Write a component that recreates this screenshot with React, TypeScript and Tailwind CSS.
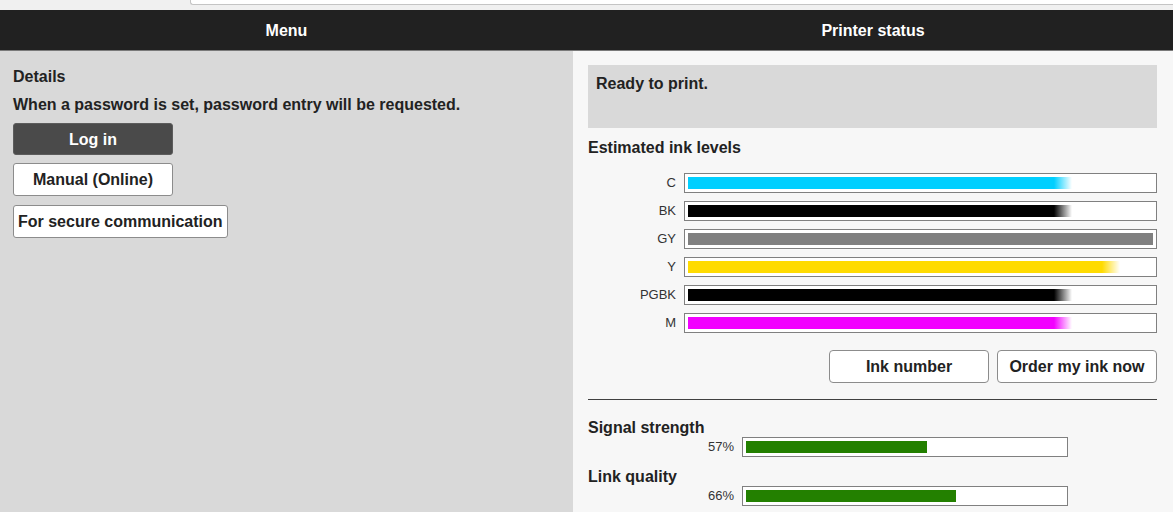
import React from 'react';

const INKS: { name: string; color: string; level: number }[] = [
  { name: 'C', color: '#00cfff', level: 82.5 },
  { name: 'BK', color: '#000000', level: 82.5 },
  { name: 'GY', color: '#808080', level: 100 },
  { name: 'Y', color: '#ffdb00', level: 93 },
  { name: 'PGBK', color: '#000000', level: 82.5 },
  { name: 'M', color: '#f200ff', level: 82.5 },
];

const FADES: Record<string, string> = {
  C: 'from-[#00cfff]',
  BK: 'from-[#000000]',
  Y: 'from-[#ffdb00]',
  PGBK: 'from-[#000000]',
  M: 'from-[#f200ff]',
};

function InkRow({ name, color, level }: { name: string; color: string; level: number }) {
  const full = level >= 100;
  return (
    <div className="flex items-center h-[20px]">
      <div className="w-[96px] pr-[8px] text-right text-[13px] text-[#333]">{name}</div>
      <div className="flex-1 h-[20px] border border-[#808080] bg-white p-[3px]">
        <div className="flex h-full">
          {full ? (
            <div className="w-full h-full" style={{ backgroundColor: color }} />
          ) : (
            <>
              <div className="h-full" style={{ width: `calc(${level}% - 18px)`, backgroundColor: color }} />
              <div className={`w-[18px] h-full bg-linear-to-r ${FADES[name]} to-white/0`} />
            </>
          )}
        </div>
      </div>
    </div>
  );
}

function SignalRow({ label, value }: { label: string; value: number }) {
  return (
    <div>
      <div className="font-bold text-[16px] leading-[18px] text-[#222]">{label}</div>
      <div className="flex items-center h-[20px]">
        <div className="w-[154px] pr-[8px] text-right text-[13px] text-[#333]">{value}%</div>
        <div className="w-[326px] h-[20px] border border-[#808080] bg-white p-[3px]">
          <div className="h-full bg-[#238000]" style={{ width: `${value}%` }} />
        </div>
      </div>
    </div>
  );
}

export default function App() {
  return (
    <div className="w-[1173px] h-[512px] overflow-hidden font-['Liberation_Sans',Arial,sans-serif] text-[#222]">
      {/* address strip */}
      <div className="h-[10px] bg-[#f0f0f0] pl-[190px]">
        <div className="h-[5px] bg-white border-l border-b border-[#c4c4c4] rounded-bl-[3px]" />
      </div>

      <div className="flex h-[41px] bg-[#212121] border-b border-[#7a7a7a] text-white font-bold text-[16px]">
        <div className="w-[573px] flex items-center justify-center pt-[1px]">Menu</div>
        <div className="flex-1 flex items-center justify-center pt-[1px]">Printer status</div>
      </div>

      <div className="flex h-[461px]">
        {/* left menu */}
        <div className="w-[573px] bg-[#d9d9d9] pl-[13px] pt-[16px]">
          <div className="font-bold text-[16px] leading-[20px]">Details</div>
          <div className="mt-[8px] font-bold text-[16px] leading-[20px]">
            When a password is set, password entry will be requested.
          </div>
          <div className="mt-[8px] flex flex-col items-start">
            <button className="w-[160px] h-[32px] pt-[2px] rounded-[3px] bg-[#4a4a4a] border border-[#5c5c5c] text-white font-bold text-[16px]">
              Log in
            </button>
            <button className="mt-[8px] w-[160px] h-[33px] rounded-[3px] bg-white border border-[#8c8c8c] font-bold text-[16px] text-[#222]">
              Manual (Online)
            </button>
            <button className="mt-[9px] px-[4px] h-[33px] rounded-[3px] bg-white border border-[#8c8c8c] font-bold text-[16px] text-[#222]">
              For secure communication
            </button>
          </div>
        </div>

        {/* printer status */}
        <div className="flex-1 bg-[#f7f7f7] pl-[15px] pr-[16px] pt-[14px]">
          <div className="h-[63px] bg-[#d9d9d9] px-[8px] pt-[9px] font-bold text-[16px] leading-[20px]">
            Ready to print.
          </div>
          <div className="mt-[10px] font-bold text-[16px] leading-[20px]">Estimated ink levels</div>
          <div className="mt-[15px] flex flex-col gap-[8px]">
            {INKS.map(ink => (
              <InkRow key={ink.name} {...ink} />
            ))}
          </div>
          <div className="mt-[17px] flex justify-end gap-[8px]">
            <button className="w-[160px] h-[33px] rounded-[4px] bg-white border border-[#8c8c8c] font-bold text-[16px] text-[#222]">
              Ink number
            </button>
            <button className="w-[160px] h-[33px] rounded-[4px] bg-white border border-[#8c8c8c] font-bold text-[16px] text-[#222]">
              Order my ink now
            </button>
          </div>
          <div className="mt-[16px] h-px bg-[#404040]" />
          <div className="mt-[19px]">
            <SignalRow label="Signal strength" value={57} />
          </div>
          <div className="mt-[11px]">
            <SignalRow label="Link quality" value={66} />
          </div>
        </div>
      </div>
    </div>
  );
}
